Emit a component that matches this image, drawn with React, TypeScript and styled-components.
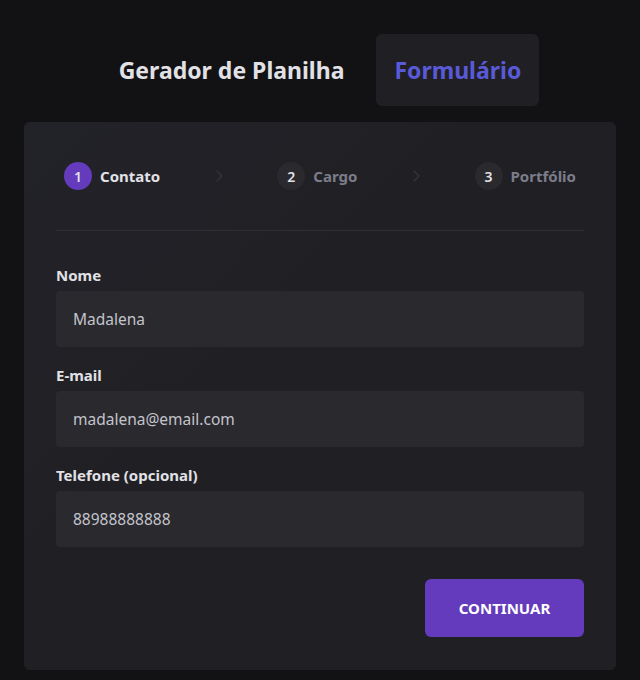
import React from "react";
import styled, { createGlobalStyle } from "styled-components";

const Global = createGlobalStyle`
  html, body { margin: 0; padding: 0; background: #121214; }
  body { font-family: "Noto Sans", "Open Sans", sans-serif; color: #e1e1e6; }
  * { box-sizing: border-box; }
`;

const Page = styled.div`
  width: 640px;
  min-height: 680px;
  padding: 34px 24px 10px;
  display: flex;
  flex-direction: column;
  gap: 16px;
`;

const Tabs = styled.nav`
  display: flex;
  justify-content: center;
  gap: 14px;
`;

const Tab = styled.button<{ $active?: boolean }>`
  height: 72px;
  padding: 0 18px;
  border: none;
  border-radius: 6px;
  background: ${(p) => (p.$active ? "#202024" : "transparent")};
  color: ${(p) => (p.$active ? "#5a5ad8" : "#e1e1e6")};
  font-family: inherit;
  font-size: 23px;
  font-weight: 700;
  cursor: pointer;
`;

const Card = styled.section`
  background: linear-gradient(135deg, #222229 0%, #202024 40%, #202024 100%);
  border-radius: 6px;
  padding: 32px 32px 33px;
  display: flex;
  flex-direction: column;
`;

const Stepper = styled.div`
  display: flex;
  align-items: center;
  justify-content: space-between;
  padding: 8px 8px 40px;
  border-bottom: 1px solid #2f2f35;
`;

const Step = styled.div<{ $active?: boolean }>`
  display: flex;
  align-items: center;
  gap: 8px;
  font-size: 15px;
  font-weight: 700;
  color: ${(p) => (p.$active ? "#e1e1e6" : "#7c7c8a")};
`;

const StepNum = styled.span<{ $active?: boolean }>`
  width: 28px;
  height: 28px;
  border-radius: 50%;
  display: flex;
  align-items: center;
  justify-content: center;
  background: ${(p) => (p.$active ? "#633bbc" : "#29292e")};
  color: #e1e1e6;
  font-size: 14px;
  font-weight: 600;
`;

const Chevron = styled.svg`
  width: 10px;
  height: 14px;
  color: #323238;
`;

const Form = styled.form`
  display: flex;
  flex-direction: column;
  gap: 18px;
  padding-top: 34px;
`;

const Field = styled.label`
  display: flex;
  flex-direction: column;
  gap: 6px;
`;

const Label = styled.span`
  font-size: 15px;
  font-weight: 700;
  line-height: 20px;
  color: #e1e1e6;
`;

const Input = styled.input`
  height: 56px;
  border: none;
  border-radius: 4px;
  background: #29292e;
  color: #c4c4cc;
  padding: 0 17px;
  font-family: inherit;
  font-size: 15.5px;
  outline: none;
`;

const Actions = styled.div`
  display: flex;
  justify-content: flex-end;
  padding-top: 14px;
`;

const Button = styled.button`
  width: 159px;
  height: 58px;
  border: none;
  border-radius: 6px;
  background: #633bbc;
  color: #ffffff;
  font-family: inherit;
  font-size: 15px;
  font-weight: 700;
  text-transform: uppercase;
  cursor: pointer;
`;

const ChevronIcon = () => (
  <Chevron viewBox="0 0 10 14" fill="none">
    <path d="M3 2l5 5-5 5" stroke="currentColor" strokeWidth="1.6" strokeLinecap="round" strokeLinejoin="round" />
  </Chevron>
);

export default function App() {
  return (
    <>
      <Global />
      <Page>
        <Tabs>
          <Tab>Gerador de Planilha</Tab>
          <Tab $active>Formulário</Tab>
        </Tabs>
        <Card>
          <Stepper>
            <Step $active>
              <StepNum $active>1</StepNum>
              Contato
            </Step>
            <ChevronIcon />
            <Step>
              <StepNum>2</StepNum>
              Cargo
            </Step>
            <ChevronIcon />
            <Step>
              <StepNum>3</StepNum>
              Portfólio
            </Step>
          </Stepper>
          <Form onSubmit={(e) => e.preventDefault()}>
            <Field>
              <Label>Nome</Label>
              <Input defaultValue="Madalena" />
            </Field>
            <Field>
              <Label>E-mail</Label>
              <Input defaultValue="madalena@email.com" />
            </Field>
            <Field>
              <Label>Telefone (opcional)</Label>
              <Input defaultValue="88988888888" />
            </Field>
            <Actions>
              <Button type="submit">Continuar</Button>
            </Actions>
          </Form>
        </Card>
      </Page>
    </>
  );
}
